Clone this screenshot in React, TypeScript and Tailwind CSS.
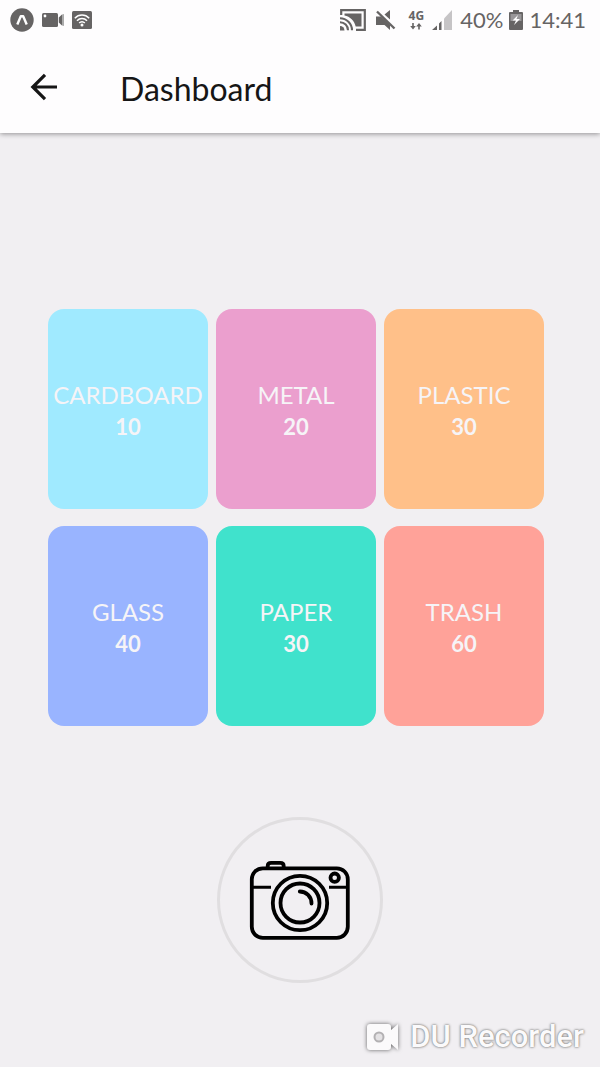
const stats = [
  { name: 'CARDBOARD', count: 10, color: 'bg-[#a0eaff]' },
  { name: 'METAL', count: 20, color: 'bg-[#eb9fce]' },
  { name: 'PLASTIC', count: 30, color: 'bg-[#ffc089]' },
  { name: 'GLASS', count: 40, color: 'bg-[#99b4ff]' },
  { name: 'PAPER', count: 30, color: 'bg-[#40e2cc]' },
  { name: 'TRASH', count: 60, color: 'bg-[#ffa299]' },
];

function StatusBar() {
  return (
    <div className="flex h-10 items-center justify-between pr-3.5 pl-2.5 text-[#666464]">
      <div className="flex items-center gap-2">
        <svg width="24" height="24" viewBox="0 0 24 24" aria-hidden="true">
          <circle cx="12" cy="12" r="11.7" fill="currentColor" />
          <path d="M7.3 16.5 10.8 8.2h2.4l3.5 8.3" fill="none" stroke="#fff" strokeWidth="2.4" strokeLinejoin="round" />
        </svg>
        <svg width="22" height="16" viewBox="0 0 22 16" aria-hidden="true">
          <rect y="1" width="16" height="14" rx="1.5" fill="currentColor" />
          <circle cx="3" cy="4" r="1.4" fill="#fff" />
          <path d="M16.8 5.5 20 2.5v11l-3.2-3z" fill="currentColor" />
          <path d="M20 2.5 22 2v12l-2-.5z" fill="#aaa" />
        </svg>
        <svg width="20" height="20" viewBox="0 0 20 20" aria-hidden="true">
          <rect y="1" width="20" height="18" rx="1.5" fill="currentColor" />
          <g fill="none" stroke="#fff" strokeWidth="1.5">
            <path d="M2.8 8.2c4-4.2 10.4-4.2 14.4 0M5 10.7c2.8-3 7.2-3 10 0M7.2 13c1.6-1.7 4-1.7 5.6 0" />
          </g>
          <circle cx="10" cy="15" r="1.5" fill="#fff" />
        </svg>
      </div>
      <div className="flex items-center">
        <svg width="26" height="22" viewBox="0 0 26 22" aria-hidden="true">
          <path d="M1.2 6V1.2h23.6v19.6H16" fill="none" stroke="currentColor" strokeWidth="2.2" />
          <path d="M4.5 4.5h17v13h-5.8C14.5 12 10 7.5 4.5 6.5z" fill="currentColor" />
          <path d="M0 9.2c6.5 0 12 5.5 12 12M0 13.3c4.5 0 8 3.5 8 8" fill="none" stroke="currentColor" strokeWidth="2.1" />
          <path d="M0 17a4.5 4.5 0 0 1 4.5 4.5H0z" fill="currentColor" />
        </svg>
        <svg className="ml-2.5" width="20" height="20" viewBox="0 0 20 20" aria-hidden="true">
          <path d="M0 6.5h5l9 8.5v5l-5.5-5H0zM8.5 4.5 14 0v9.5z" fill="currentColor" />
          <path d="M1 1.5 18.5 18.5" stroke="currentColor" strokeWidth="2.4" />
        </svg>
        <div className="ml-3 flex w-4 flex-col items-center">
          <span className="font-['Noto_Sans',sans-serif] text-xs leading-3 font-bold">4G</span>
          <svg width="12" height="8" viewBox="0 0 12 8" aria-hidden="true">
            <path d="M2.2 1h1.6v3h2L3 7.5.2 4h2zM8.2 7.5h1.6v-3h2L9 1 6.2 4.5h2z" fill="currentColor" />
          </svg>
        </div>
        <svg className="ml-2" width="20" height="20" viewBox="0 0 20 20" aria-hidden="true">
          <path d="M0 20 5 15.5V20zM7 13.5l2.5-2.5v9H7z" fill="currentColor" />
          <path d="M12 8.5 20 0v20h-8z" fill="#c6c4c6" />
        </svg>
        <span className="ml-2 text-[22px] leading-6">40%</span>
        <svg className="ml-1.5" width="14" height="20" viewBox="0 0 14 20" aria-hidden="true">
          <path d="M4 0h6v2h3q1 0 1 1v16q0 1-1 1H1q-1 0-1-1V3q0-1 1-1h3z" fill="currentColor" />
          <path d="M1.5 4h11v7h-11z" fill="#999799" />
          <path d="M9 5 3.5 10.5H7L5 15l6-6H7.5z" fill="#fff" />
        </svg>
        <span className="ml-1.5 text-[22px] leading-6">14:41</span>
      </div>
    </div>
  );
}

function CameraIcon() {
  return (
    <svg width="104" height="84" viewBox="0 0 104 84" fill="none" stroke="#000" strokeWidth="3.8" aria-hidden="true">
      <rect x="3.8" y="10.3" width="96" height="69.5" rx="11" />
      <path d="M19.7 10V8q0-3.2 3.5-3.2h9q3.5 0 3.5 3.2v2" strokeLinejoin="round" />
      <path d="M4 29.3h19M81 29.3h19" strokeWidth="3" />
      <circle cx="52" cy="45" r="27.2" />
      <circle cx="52" cy="45" r="19.5" />
      <path d="M51.8 33.5c6.5 0 11.7 5.2 11.7 12" strokeLinecap="round" />
      <circle cx="86.7" cy="19.7" r="4.2" />
    </svg>
  );
}

export default function App() {
  return (
    <div className="flex min-h-screen flex-col bg-[#f1eff2] font-['Lato',sans-serif]">
      <header className="bg-[#fefdfe] shadow-[0_1px_5px_rgba(0,0,0,0.4)]">
        <StatusBar />
        <div className="flex h-[93px] items-center pl-7">
          <button type="button" aria-label="Back" className="flex size-8 items-center justify-center">
            <svg width="28" height="28" viewBox="0 0 28 28" fill="none" stroke="#161616" strokeWidth="3.2" aria-hidden="true">
              <path d="M27 14H3.5M15 1.8 2.8 14 15 26.2" />
            </svg>
          </button>
          <h1 className="ml-[60px] pt-1 text-[32px] leading-10 text-[#161616]">Dashboard</h1>
        </div>
      </header>
      <main className="flex flex-1 flex-col items-center pt-44">
        <ul className="grid w-full grid-cols-3 gap-x-2 gap-y-[17px] pr-14 pl-12">
          {stats.map((stat) => (
            <li
              key={stat.name}
              className={`flex h-[200px] flex-col items-center justify-center rounded-2xl pt-1 text-[#f6f4f7] ${stat.color}`}
            >
              <span className="text-2xl leading-8">{stat.name}</span>
              <span className="text-[22px] leading-8 font-bold">{stat.count}</span>
            </li>
          ))}
        </ul>
        <button
          type="button"
          aria-label="Take a picture"
          className="mt-[91px] flex size-[166px] items-center justify-center rounded-full border-[3px] border-[#e0dee0]"
        >
          <CameraIcon />
        </button>
      </main>
      <footer className="flex h-[60px] items-center justify-end gap-2.5 pr-4">
        <svg
          className="drop-shadow-[0_0_2px_rgba(0,0,0,0.6)]"
          width="34"
          height="28"
          viewBox="0 0 34 28"
          aria-hidden="true"
        >
          <path
            d="M4 1h18q3 0 3 3v3l7-6v26l-7-6v3q0 3-3 3H4q-3 0-3-3V4q0-3 3-3z"
            fill="#fbfafb"
          />
          <circle cx="13" cy="14" r="4.5" fill="#e4e2e4" stroke="#b3b1b3" strokeWidth="2" />
        </svg>
        <span className="font-['Roboto',sans-serif] text-[31px] leading-9 font-medium text-[#fbfafb] [text-shadow:0_0_2px_#777,0_0_3px_#999]">
          DU Recorder
        </span>
      </footer>
    </div>
  );
}
